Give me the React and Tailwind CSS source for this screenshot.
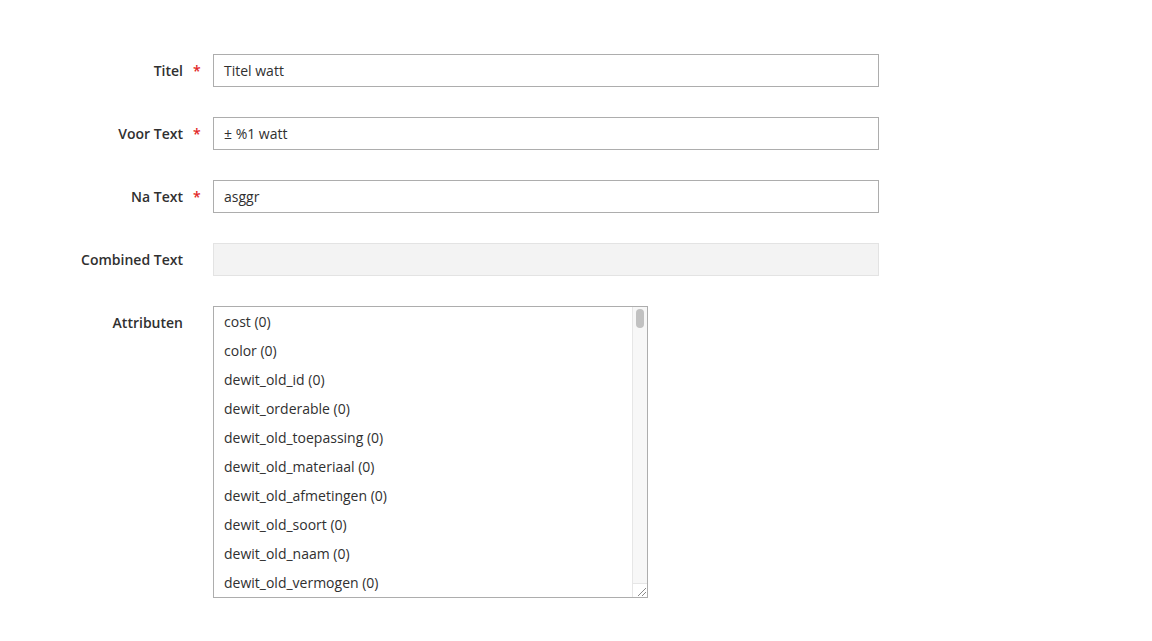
const fields = [
  { label: 'Titel', value: 'Titel watt', required: true },
  { label: 'Voor Text', value: '± %1 watt', required: true },
  { label: 'Na Text', value: 'asggr', required: true },
  { label: 'Combined Text', value: '', disabled: true },
];

const attributes = [
  'cost (0)',
  'color (0)',
  'dewit_old_id (0)',
  'dewit_orderable (0)',
  'dewit_old_toepassing (0)',
  'dewit_old_materiaal (0)',
  'dewit_old_afmetingen (0)',
  'dewit_old_soort (0)',
  'dewit_old_naam (0)',
  'dewit_old_vermogen (0)',
];

const Label = ({ text, required }) => (
  <div className="flex items-center w-[213px] shrink-0">
    <div className="w-[183px] text-right text-[14px] font-semibold text-[#303030]">
      {text}
    </div>
    {required && (
      <span className="pl-[10px] text-[14px] font-semibold text-[#e22626]">*</span>
    )}
  </div>
);

export default function App() {
  return (
    <div
      className="min-h-[641px] bg-white pt-[54px]"
      style={{ fontFamily: '"Open Sans", "Liberation Sans", sans-serif' }}
    >
      <div className="flex flex-col gap-[30px]">
        {fields.map(f => (
          <div key={f.label} className="flex items-center">
            <Label text={f.label} required={f.required} />
            <div
              className={`w-[666px] h-[33px] px-[10px] flex items-center text-[14px] text-[#303030] border ${
                f.disabled
                  ? 'bg-[#f3f3f3] border-[#e3e3e3]'
                  : 'bg-white border-[#adadad]'
              }`}
            >
              {f.value}
            </div>
          </div>
        ))}

        {/* ATTRIBUTEN */}
        <div className="flex items-start">
          <div className="w-[213px] shrink-0 pt-[6px]">
            <div className="w-[183px] text-right text-[14px] font-semibold text-[#303030]">
              Attributen
            </div>
          </div>
          <div className="w-[435px] h-[292px] border border-[#adadad] flex overflow-hidden">
            <div className="flex-1">
              {attributes.map(a => (
                <div
                  key={a}
                  className="h-[29px] leading-[29px] pl-[10px] text-[14px] text-[#303030] whitespace-nowrap"
                >
                  {a}
                </div>
              ))}
            </div>
            <div className="w-[15px] bg-[#f7f7f7] border-l border-[#e6e6e6] flex flex-col">
              <div className="flex-1 pt-[2px] flex justify-center">
                <div className="w-[8px] h-[19px] rounded-full bg-[#c1c1c1]" />
              </div>
              <div className="h-[14px] border-t border-[#e6e6e6] bg-white flex items-end justify-end">
                <svg width="12" height="12" viewBox="0 0 12 12">
                  <path d="M11 3L3 11M11 7L7 11" stroke="#8a8a8a" strokeWidth="1" />
                </svg>
              </div>
            </div>
          </div>
        </div>
      </div>
    </div>
  );
}
